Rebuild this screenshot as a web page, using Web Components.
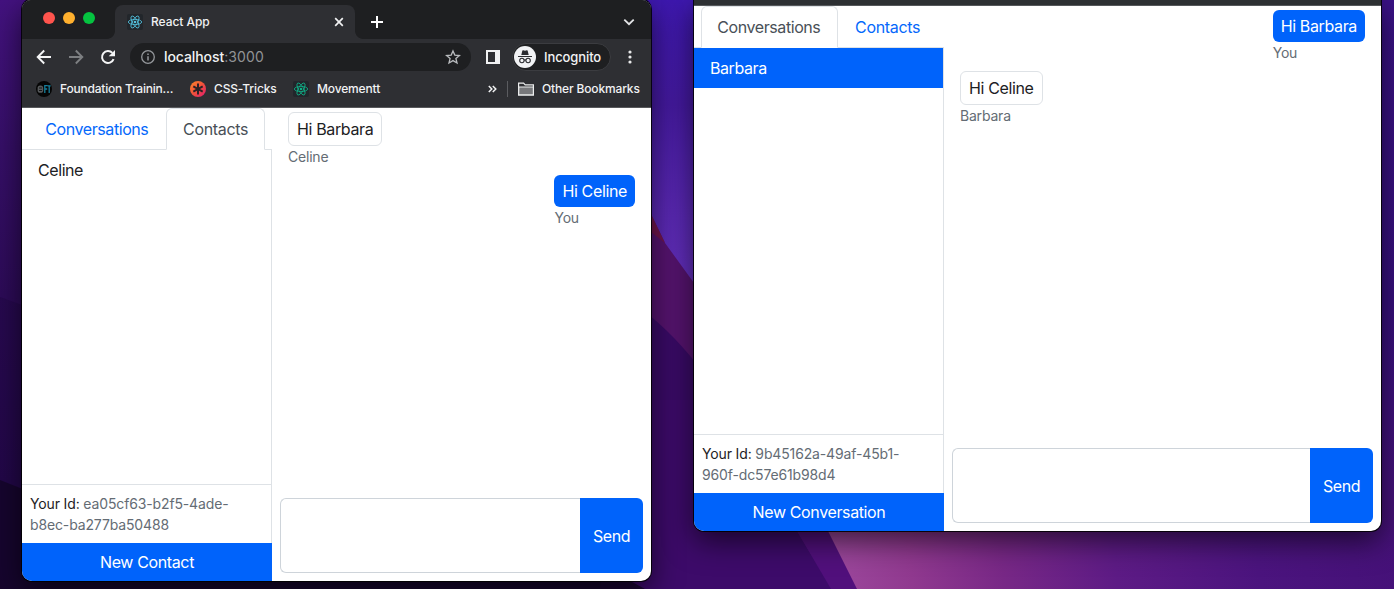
<!DOCTYPE html>
<html lang="en">
<head>
<meta charset="utf-8">
<title>Chat</title>
<style>
html,body{margin:0;height:100%;overflow:hidden;background:#2b0a52}
body{font-family:Inter,"Liberation Sans",sans-serif;font-size:16px;line-height:24px;color:#1d2124}
</style>
</head>
<body>
<desk-top>
  <app-window style="left:22px;top:0;width:629px;height:581px">
    <browser-chrome></browser-chrome>
    <chat-app>
      <chat-sidebar slot="side" active="contacts" uid="ea05cf63-b2f5-4ade-b8ec-ba277ba50488" action="New Contact"><list-item>Celine</list-item></chat-sidebar>
      <chat-message from="Celine">Hi Barbara</chat-message>
      <chat-message mine from="You">Hi Celine</chat-message>
    </chat-app>
  </app-window>
  <app-window style="left:694px;top:0;width:687px;height:531px">
    <chrome-edge></chrome-edge>
    <chat-app>
      <chat-sidebar slot="side" active="conversations" uid="9b45162a-49af-45b1-960f-dc57e61b98d4" action="New Conversation"><list-item active>Barbara</list-item></chat-sidebar>
      <chat-message mine from="You">Hi Barbara</chat-message>
      <chat-message from="Barbara">Hi Celine</chat-message>
    </chat-app>
  </app-window>
</desk-top>
<script>
const define = (name, html, setup) => customElements.define(name, class extends HTMLElement {
  connectedCallback() {
    if (this.shadowRoot) return;
    const t = document.createElement('template');
    t.innerHTML = typeof html === 'function' ? html(this) : html;
    this.attachShadow({mode: 'open'}).append(t.content.cloneNode(true));
  }
});

define('desk-top', `
<style>
:host{display:block;position:relative;width:1394px;height:589px;overflow:hidden}
.wall{position:absolute;inset:0}
</style>
<svg class="wall" width="1394" height="589" viewBox="0 0 1394 589">
  <defs>
    <linearGradient id="l" x1="0" y1="0" x2="0" y2="1"><stop offset="0" stop-color="#43127f"/><stop offset=".25" stop-color="#360f68"/><stop offset=".5" stop-color="#2d0b58"/><stop offset="1" stop-color="#220848"/></linearGradient>
    <linearGradient id="m" x1="0" y1="0" x2="0" y2="1"><stop offset="0" stop-color="#3e18b0"/><stop offset=".35" stop-color="#451aa0"/><stop offset=".7" stop-color="#5a28b4"/><stop offset="1" stop-color="#6632c0"/></linearGradient>
    <linearGradient id="p" gradientUnits="userSpaceOnUse" x1="830" y1="560" x2="1394" y2="500"><stop offset="0" stop-color="#9c489c"/><stop offset=".14" stop-color="#90398f"/><stop offset=".3" stop-color="#782886"/><stop offset=".5" stop-color="#5d1b85"/><stop offset=".75" stop-color="#4b147e"/><stop offset="1" stop-color="#451178"/></linearGradient>
    <linearGradient id="r" x1="0" y1="0" x2="0" y2="1"><stop offset="0" stop-color="#3a1286"/><stop offset=".6" stop-color="#37107e"/><stop offset="1" stop-color="#46127c"/></linearGradient>
  </defs>
  <rect width="600" height="589" fill="url(#l)"/>
  <path d="M0 297L30 308V589H0z" fill="#1d073f" opacity=".35"/>
  <rect x="600" width="160" height="300" fill="url(#m)"/>
  <path d="M640 190L651 214L665 243L694 283L760 380V589H640z" fill="#56146f"/>
  <path d="M651 214L665 243L651 232z" fill="#70164e"/>
  <path d="M640 308Q675 334 705 375L850 589H600z" fill="#3a0b67"/>
  <path d="M651 400L770 400L850 589H600z" fill="#3d0b6a"/>
  <path d="M0 480L30 492V570H610L645 589H0z" fill="#140528" opacity=".8"/>
  <path d="M750 440L860 589H832L797 531z" fill="#55107f"/>
  <path d="M797 531L825 520L870 589H831z" fill="#51107c"/>
  <path d="M800 475L857 589H1394V475z" fill="url(#p)"/>
  <rect x="1370" width="24" height="500" fill="url(#r)"/>
</svg>
<slot></slot>`);

define('app-window', `
<style>
:host{position:absolute;display:flex;flex-direction:column;background:#fff;border-radius:0 0 10px 10px;box-shadow:0 0 0 1px rgba(0,0,0,.85),0 10px 30px rgba(0,0,0,.62)}
:host(:first-child){border-radius:9px 9px 10px 10px}
.clip{flex:1;display:flex;flex-direction:column;overflow:hidden;border-radius:inherit}
::slotted(chat-app){flex:1}
</style><div class="clip"><slot></slot></div>`);

define('chrome-edge', `<style>:host{display:block;height:5px;background:#2d3033;border-bottom:1px solid #55585b}</style>`);

define('react-logo', `
<style>:host{display:block;width:16px;height:16px;background:var(--bg,#22262b);border-radius:2px}svg{display:block}</style>
<svg width="16" height="16" viewBox="0 0 16 16" fill="none" stroke="currentColor" stroke-width=".85">
<circle cx="8" cy="8" r="1.3" fill="currentColor" stroke="none"/>
<ellipse cx="8" cy="8" rx="6.7" ry="2.6"/><ellipse cx="8" cy="8" rx="6.7" ry="2.6" transform="rotate(60 8 8)"/><ellipse cx="8" cy="8" rx="6.7" ry="2.6" transform="rotate(120 8 8)"/></svg>`);

define('browser-chrome', `
<style>
:host{display:block;height:107px;background:#2e2f33;border-bottom:1px solid #58595c;color:#f1f2f3;font-size:12px;line-height:16px;font-weight:500;white-space:nowrap}
svg{display:block;flex:none}
.strip{display:flex;height:39px;background:#1e1f21}
.lights{display:flex;gap:8px;padding:12px 0 0 21px;width:72px;box-sizing:border-box;flex:none}
.lights i{width:12px;height:12px;border-radius:50%;flex:none}
.tab{position:relative;display:flex;align-items:center;box-sizing:border-box;width:240px;height:34px;margin:5px 0 0 21px;padding:0 10px 0 12px;background:#2e2f33;border-radius:8px 8px 0 0}
.tab:before,.tab:after{content:"";position:absolute;bottom:0;width:8px;height:8px}
.tab:before{left:-8px;background:radial-gradient(circle at 0 0,#0000 7.5px,#2e2f33 8.3px)}
.tab:after{right:-8px;background:radial-gradient(circle at 100% 0,#0000 7.5px,#2e2f33 8.3px)}
.tab span{flex:1;margin-left:8px;letter-spacing:-.05px}
.strip .plus{margin:14.5px 0 0 15px}
.strip .down{margin:17px 16px 0 auto}
.bar{display:flex;align-items:center;height:36px}
.bar .omni{display:flex;align-items:center;box-sizing:border-box;width:341px;height:28px;border-radius:14px;background:#1e1f21;margin-left:14px;padding:0 10px 0 11px}
.omni span{flex:1;margin-left:9px;font-size:14px;font-weight:500;letter-spacing:-.08px}
.omni b{font-weight:400;color:#919396;letter-spacing:.1px}
.chip{display:flex;align-items:center;box-sizing:border-box;width:99px;height:28px;border:1px solid #3b3c40;border-radius:14px;background:#1e1f21;margin-left:12px;padding-left:1px;font-size:13px;letter-spacing:-.1px}
.chip span{margin-left:8px}
.marks{display:flex;align-items:center;height:28px;letter-spacing:-.15px}
.marks span{flex:none}
</style>
<div class="strip">
  <div class="lights"><i style="background:#ff544d"></i><i style="background:#ffb02e"></i><i style="background:#05c340"></i></div>
  <div class="tab"><react-logo style="color:#53bfdc"></react-logo><span>React App</span>
    <svg width="12" height="12" viewBox="0 0 12 12" stroke="#f1f2f3" stroke-width="1.7"><path d="M2.2 2.2l7.6 7.6M9.8 2.2L2.2 9.8"/></svg></div>
  <svg class="plus" width="14" height="14" viewBox="0 0 14 14" stroke="#fff" stroke-width="2"><path d="M7 1v12M1 7h12"/></svg>
  <svg class="down" width="12" height="10" viewBox="0 0 12 10" fill="none" stroke="#e3e4e6" stroke-width="1.8"><path d="M1.3 2.6L6 7.2l4.7-4.6"/></svg>
</div>
<div class="bar">
  <svg style="margin-left:14px" width="16" height="16" viewBox="0 0 16 16" fill="none" stroke="#f4f5f6" stroke-width="1.9"><path d="M15 8H2M8.2 1.5L1.7 8l6.5 6.5"/></svg>
  <svg style="margin-left:16px" width="16" height="16" viewBox="0 0 16 16" fill="none" stroke="#7d7f82" stroke-width="1.9"><path d="M1 8h13M7.8 1.5L14.3 8l-6.5 6.5"/></svg>
  <svg style="margin-left:16px" width="16" height="16" viewBox="0 0 16 16" fill="none" stroke="#f4f5f6" stroke-width="2"><path d="M13.6 10.2A6 6 0 1 1 12.4 3.9"/><path d="M15 1v6.3H8.7z" fill="#f4f5f6" stroke="none"/></svg>
  <div class="omni">
    <svg width="14" height="14" viewBox="0 0 14 14" fill="none" stroke="#94979b" stroke-width="1.3"><circle cx="7" cy="7" r="6.3"/><path d="M7 6.2v4.2M7 3.4v1.5" stroke-width="1.5"/></svg>
    <span>localhost<b>:3000</b></span>
    <svg width="16" height="16" viewBox="0 0 16 16" fill="none" stroke="#b9bbbe" stroke-width="1.3"><path d="M8 1.9l1.8 4.2 4.6.4-3.5 3 1.1 4.5L8 11.6 4 14l1.1-4.5-3.5-3 4.6-.4z"/></svg>
  </div>
  <svg style="margin-left:15px" width="14" height="14" viewBox="0 0 14 14"><path fill="#f1f2f3" fill-rule="evenodd" d="M0 0h14v14H0zM2 2v10h7V2z"/></svg>
  <div class="chip"><svg width="22" height="22" viewBox="0 0 22 22"><circle cx="11" cy="11" r="11" fill="#f1f2f4"/><path d="M7.3 8.9l1-4.2q.2-.7.9-.5l1.8.5 1.8-.5q.7-.2.9.5l1 4.2zM4 10h14v1H4z" fill="#2b2c30"/><g fill="none" stroke="#2b2c30" stroke-width="1.1"><circle cx="7.9" cy="14.5" r="2.2"/><circle cx="14.1" cy="14.5" r="2.2"/><path d="M10 14.2q1-.7 2 0"/></g></svg><span>Incognito</span></div>
  <svg style="margin-left:16.5px" width="4" height="14" viewBox="0 0 4 14" fill="#e8e9ea"><circle cx="2" cy="2" r="1.6"/><circle cx="2" cy="7" r="1.6"/><circle cx="2" cy="12" r="1.6"/></svg>
</div>
<div class="marks">
  <svg style="margin-left:14px" width="16" height="16" viewBox="0 0 16 16"><circle cx="8" cy="8" r="8" fill="#050505"/><rect x="1.6" y="4.4" width="5.6" height="7.4" rx="2.6" fill="#55585a"/><path d="M3 7h3M3 9.5h3" stroke="#161616"/><path d="M8.8 12V4.7h2.8M8.8 8h2.4M11.7 4.8h3M13.2 4.8V12" fill="none" stroke="#167f9c" stroke-width="1.3"/></svg>
  <span style="width:122px;margin-left:8px;letter-spacing:-.21px">Foundation Trainin…</span>
  <svg style="margin-left:8px" width="16" height="16" viewBox="0 0 16 16"><defs><linearGradient id="c" x1="0" y1="0" x2="1" y2="1"><stop offset="0" stop-color="#ff8a28"/><stop offset=".5" stop-color="#f0503c"/><stop offset="1" stop-color="#e01870"/></linearGradient></defs><circle cx="8" cy="8" r="8" fill="url(#c)"/><path d="M8 2.6v10.8M3.3 5.3l9.4 5.4M12.7 5.3l-9.4 5.4" stroke="#2b2226" stroke-width="2"/></svg>
  <span style="width:71px;margin-left:8px">CSS-Tricks</span>
  <react-logo style="color:#0fae85;margin-left:8px"></react-logo>
  <span style="width:163px;margin-left:8px">Movementt</span>
  <svg style="margin-left:8px" width="9" height="8" viewBox="0 0 9 8" fill="none" stroke="#f1f2f3" stroke-width="1.5"><path d="M.8 1L3.8 4l-3 3M4.8 1l3 3-3 3"/></svg>
  <i style="width:1px;height:16px;background:#5b5c60;margin-left:10px"></i>
  <svg style="margin-left:10px" width="16" height="14" viewBox="0 0 16 14" stroke="#eceded" stroke-width="1.2"><path d="M.6 12.9V1.1h5l1.6 1.7h8.2v10.1z" fill="#2e2f33"/><path d="M.8 5h14.6v7.9H.6z" fill="#77787b"/></svg>
  <span style="margin-left:8px">Other Bookmarks</span>
</div>`);

define('chat-app', `
<style>
:host{display:flex;min-height:0}
main{flex:1;display:flex;flex-direction:column;min-width:0}
.log{flex:1;display:flex;flex-direction:column;gap:8px;padding:4px 16px;align-items:flex-start}
</style>
<slot name="side"></slot>
<main><div class="log"><slot></slot></div><message-form></message-form></main>`);

define('chat-sidebar', el => {
  const on = name => el.getAttribute('active') === name ? 'on' : '';
  const parts = el.getAttribute('uid').split('-');
  return `
<style>
:host{display:flex;flex-direction:column;width:250px;flex:none}
nav{display:flex;padding-left:7px;height:42px;box-sizing:border-box;border-bottom:1px solid #dee2e6}
nav a{box-sizing:border-box;height:42px;padding:8px 0 0 16px;border:1px solid transparent;border-radius:6px 6px 0 0;color:#0568fb;letter-spacing:-.31px;white-space:nowrap}
nav a:first-child{width:137px;padding-left:15.3px;letter-spacing:-.42px}nav a:last-child{width:99px}
nav a.on{color:#495057;background:#fff;border-color:#dee2e6 #dee2e6 #fff}
.list{flex:1;border-right:1px solid #dee2e6}
.id{border-top:1px solid #dee2e6;border-right:1px solid #dee2e6;padding:8px;font-size:14px;line-height:21px;letter-spacing:-.14px;white-space:nowrap}
.id span{color:#646c74}
button{all:unset;box-sizing:border-box;height:38px;background:#0063fb;color:#fff;text-align:center;letter-spacing:-.37px}
</style>
<nav><a class="${on('conversations')}">Conversations</a><a class="${on('contacts')}">Contacts</a></nav>
<div class="list"><slot></slot></div>
<div class="id">Your Id: <span>${parts.slice(0, 3).join('-')}-</span><br><span>${parts.slice(3).join('-')}</span></div>
<button>${el.getAttribute('action')}</button>`;
});

define('list-item', `
<style>
:host{display:block;height:24px;padding:8px 16px;letter-spacing:-.42px}
:host([active]){background:#0063fb;color:#fff}
</style><slot></slot>`);

define('chat-message', el => `
<style>
:host{display:block;letter-spacing:-.36px}
:host([mine]){align-self:flex-end}
.bubble{padding:4px 8px;border:1px solid #dee2e6;border-radius:6px;white-space:nowrap}
:host([mine]) .bubble{border:0;background:#0063fb;color:#fff}
.from{font-size:14px;line-height:21px;color:#646c74;letter-spacing:-.2px}
</style>
<div class="bubble"><slot></slot></div><div class="from">${el.getAttribute('from')}</div>`);

define('message-form', `
<style>
:host{display:flex;height:75px;margin:8px}
.field{flex:1;border:1px solid #ced4da;border-right:0;border-radius:6px 0 0 6px}
button{all:unset;width:63px;background:#0063fb;color:#fff;text-align:center;border-radius:0 6px 6px 0;letter-spacing:-.4px}
</style>
<div class="field"></div><button>Send</button>`);
</script>
</body>
</html>
